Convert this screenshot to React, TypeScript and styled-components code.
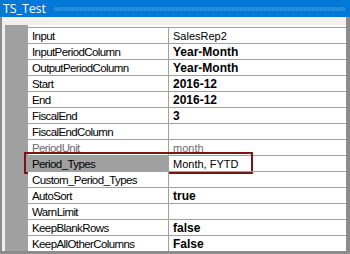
import React from "react";
import styled, { createGlobalStyle } from "styled-components";

const GlobalStyle = createGlobalStyle`
  html, body {
    margin: 0;
    padding: 0;
    background: #f0f0f0;
  }
  body {
    font-family: "Liberation Sans", Arial, sans-serif;
  }
`;

type Prop = {
  name: string;
  value: string;
  bold?: boolean;
  disabled?: boolean;
  selected?: boolean;
};

const props: Prop[] = [
  { name: "Input", value: "SalesRep2" },
  { name: "InputPeriodColumn", value: "Year-Month", bold: true },
  { name: "OutputPeriodColumn", value: "Year-Month", bold: true },
  { name: "Start", value: "2016-12", bold: true },
  { name: "End", value: "2016-12", bold: true },
  { name: "FiscalEnd", value: "3", bold: true },
  { name: "FiscalEndColumn", value: "" },
  { name: "PeriodUnit", value: "month", disabled: true },
  { name: "Period_Types", value: "Month, FYTD", selected: true },
  { name: "Custom_Period_Types", value: "" },
  { name: "AutoSort", value: "true", bold: true },
  { name: "WarnLimit", value: "" },
  { name: "KeepBlankRows", value: "false", bold: true },
  { name: "KeepAllOtherColumns", value: "False", bold: true },
];

const Frame = styled.div`
  width: 350px;
  height: 254px;
  display: flex;
  flex-direction: column;
  overflow: hidden;
`;

const TitleBar = styled.div`
  height: 17px;
  background: #0078d7;
  display: flex;
  align-items: center;
  padding: 0 5px 0 3px;
  gap: 8px;
`;

const Title = styled.span`
  color: #fff;
  font-family: "Open Sans", "Liberation Sans", sans-serif;
  font-size: 12.5px;
  line-height: 17px;
  letter-spacing: -0.1px;
`;

const Grip = styled.span`
  flex: 1;
  height: 4px;
  margin-top: 1px;
  background-image: repeating-conic-gradient(#4a9be0 0 25%, transparent 0 50%);
  background-size: 2px 2px;
`;

const Body = styled.div`
  flex: 1;
  display: flex;
  flex-direction: column;
  background: #f0f0f0;
  border-left: 2px solid #8c8c8c;
  border-right: 4px solid #8c8c8c;
  border-bottom: 3px solid #8c8c8c;
  padding: 8px 0 0 3px;
`;

const Grid = styled.div`
  flex: 1;
  display: flex;
  background: #a0a0a0;
`;

const Margin = styled.div`
  width: 23px;
`;

const Rows = styled.div`
  flex: 1;
  padding-top: 2px;
  background: #fff;
`;

const Row = styled.div`
  position: relative;
  display: grid;
  grid-template-columns: 141px 1fr;
  height: 16px;
  box-sizing: border-box;
  border-top: 1px solid #a0a0a0;
  line-height: 16px;
`;

const NameCell = styled.div<{ $selected?: boolean; $disabled?: boolean }>`
  padding-left: 4px;
  border-right: 1px solid #a0a0a0;
  background: ${(p) => (p.$selected ? "#a0a0a0" : "#fff")};
  color: ${(p) => (p.$disabled ? "#6d6d6d" : "#000")};
  font-size: 11.5px;
  letter-spacing: -0.6px;
  white-space: nowrap;
  overflow: hidden;
`;

const ValueCell = styled.div<{ $bold?: boolean; $disabled?: boolean }>`
  padding-left: 4px;
  font-size: ${(p) => (p.$bold ? "12px" : "11px")};
  font-weight: ${(p) => (p.$bold ? 700 : 400)};
  color: ${(p) => (p.$disabled ? "#6d6d6d" : "#000")};
  white-space: nowrap;
  overflow: hidden;
`;

const Highlight = styled.div`
  position: absolute;
  left: -4px;
  top: -4px;
  width: 229px;
  height: 22px;
  box-sizing: border-box;
  border: 2px solid #7b1416;
  pointer-events: none;
`;

export default function App() {
  return (
    <>
      <GlobalStyle />
      <Frame>
        <TitleBar>
          <Title>TS_Test</Title>
          <Grip />
        </TitleBar>
        <Body>
          <Grid>
            <Margin />
            <Rows>
              {props.map((p) => (
                <Row key={p.name}>
                  <NameCell $selected={p.selected} $disabled={p.disabled}>
                    {p.name}
                  </NameCell>
                  <ValueCell $bold={p.bold} $disabled={p.disabled}>
                    {p.value}
                  </ValueCell>
                  {p.selected && <Highlight />}
                </Row>
              ))}
            </Rows>
          </Grid>
        </Body>
      </Frame>
    </>
  );
}
